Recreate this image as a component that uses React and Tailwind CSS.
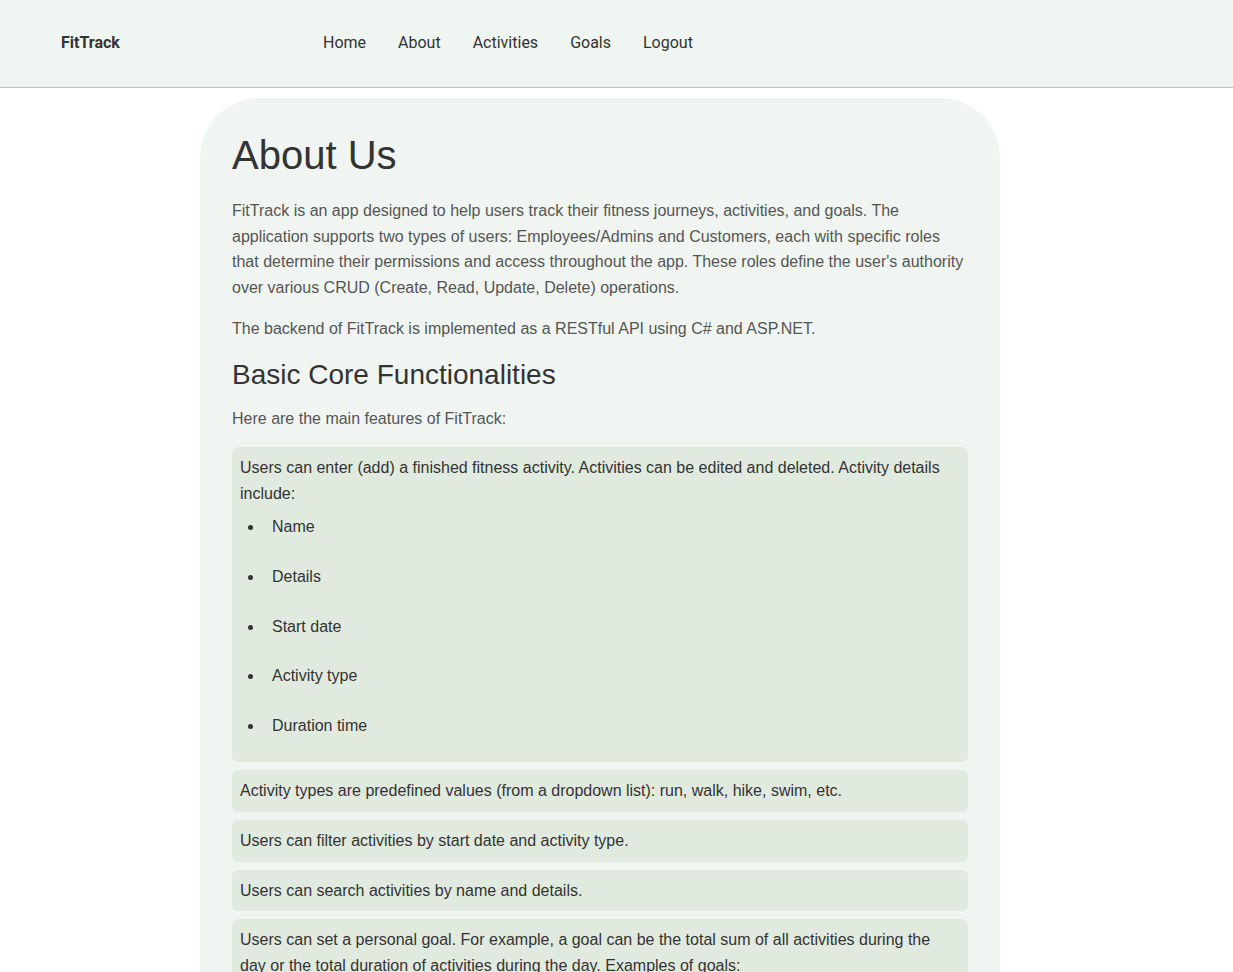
import React from "react";

const navItems = ["Home", "About", "Activities", "Goals", "Logout"];

const activityDetails = ["Name", "Details", "Start date", "Activity type", "Duration time"];

const Feature = ({ children }) => (
    <li className="bg-[#e1eadf] rounded-md p-2 mb-2 text-[#333]">{children}</li>
);

const SubItem = ({ children }) => <li className="p-2 mb-2">{children}</li>;

export default function App() {
    return (
        <div className="min-h-screen bg-white font-['Liberation_Sans',Arial,sans-serif] text-base leading-[1.6]">
            {/* Header */}
            <header className="h-[88px] bg-[#eff5f1] border-b border-[#b8c2c6] flex items-center pl-[61px] pb-[2px] font-['Roboto',sans-serif]">
                <div className="w-[262px] font-bold text-[#333]">FitTrack</div>
                <nav className="flex gap-8 text-[#333]">
                    {navItems.map((item) => (
                        <a key={item} href="#" className="hover:underline">
                            {item}
                        </a>
                    ))}
                </nav>
            </header>

            {/* About card */}
            <main className="ml-[200px] mt-[10px] w-[800px] bg-[#f0f5f1] rounded-t-[60px] px-8 pt-[33px] pb-8">
                <h1 className="text-[40px] leading-[1.2] text-[#333] mb-[19px]">About Us</h1>
                <p className="text-[#555] mb-4">
                    FitTrack is an app designed to help users track their fitness journeys, activities, and goals. The
                    application supports two types of users: Employees/Admins and Customers, each with specific roles
                    that determine their permissions and access throughout the app. These roles define the user's
                    authority over various CRUD (Create, Read, Update, Delete) operations.
                </p>
                <p className="text-[#555] mb-[16px]">
                    The backend of FitTrack is implemented as a RESTful API using C# and ASP.NET.
                </p>

                <h2 className="text-[28px] leading-[1.2] text-[#333] mb-[14px]">Basic Core Functionalities</h2>
                <p className="text-[#555] mb-4">Here are the main features of FitTrack:</p>

                <ul>
                    <Feature>
                        Users can enter (add) a finished fitness activity. Activities can be edited and deleted. Activity
                        details include:
                        <ul className="list-disc pl-6">
                            {activityDetails.map((d) => (
                                <SubItem key={d}>{d}</SubItem>
                            ))}
                        </ul>
                    </Feature>
                    <Feature>Activity types are predefined values (from a dropdown list): run, walk, hike, swim, etc.</Feature>
                    <Feature>Users can filter activities by start date and activity type.</Feature>
                    <Feature>Users can search activities by name and details.</Feature>
                    <Feature>
                        Users can set a personal goal. For example, a goal can be the total sum of all activities during the
                        day or the total duration of activities during the day. Examples of goals:
                    </Feature>
                </ul>
            </main>
        </div>
    );
}
